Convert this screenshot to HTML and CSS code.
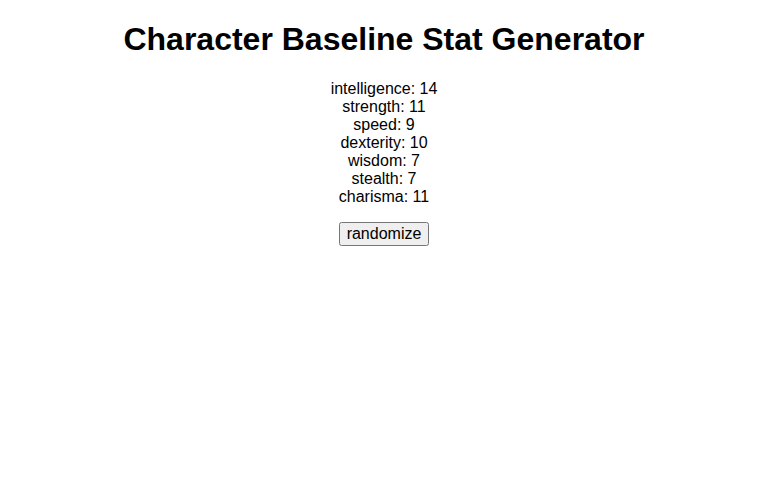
FILE: index.html
```html
<!DOCTYPE html>
<html lang="en">
<head>
  <meta charset="UTF-8" />
  <meta name="viewport" content="width=device-width, initial-scale=1.0" />
  <title>Character Baseline Stat Generator</title>
  <link rel="stylesheet" href="styles.css">
</head>
<body>
  <h1>Character Baseline Stat Generator</h1>
  <div class="stats" id="stats">
    <p>intelligence: 14</p>
    <p>strength: 11</p>
    <p>speed: 9</p>
    <p>dexterity: 10</p>
    <p>wisdom: 7</p>
    <p>stealth: 7</p>
    <p>charisma: 11</p>
  </div>
  <p class="actions">
    <button id="randomizeBtn">randomize</button>
  </p>

  <script>
    const stats = ['intelligence', 'strength', 'speed', 'dexterity', 'wisdom', 'stealth', 'charisma'];
    const box = document.getElementById('stats');

    document.getElementById('randomizeBtn').addEventListener('click', () => {
      box.innerHTML = '';
      stats.forEach(name => {
        const p = document.createElement('p');
        p.textContent = `${name}: ${Math.floor(Math.random() * 16) + 3}`;
        box.appendChild(p);
      });
    });
  </script>
</body>
</html>
```

FILE: styles.css
```css
body {
  font-family: "Liberation Sans", Arial, sans-serif;
  text-align: center;
  color: #000;
  background: #fff;
  margin: 0 8px;
}

h1 {
  font-size: 32px;
  margin: 21px 0 22px;
}

.stats p {
  margin: 0;
}

.actions {
  margin: 16px 0;
}

button {
  font-family: "Liberation Sans", Arial, sans-serif;
  font-size: 16px;
}
```
